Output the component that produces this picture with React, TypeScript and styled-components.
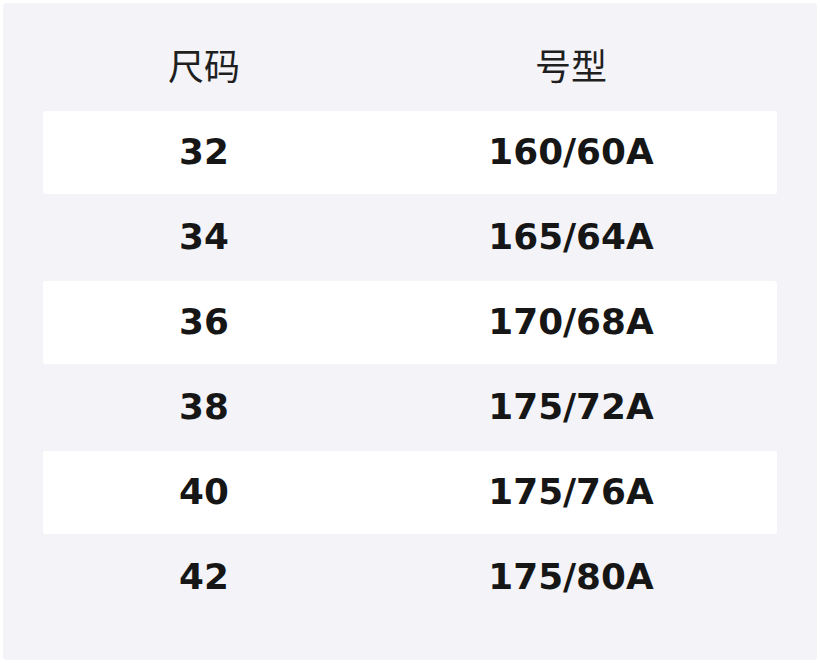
import React from "react";
import styled, { createGlobalStyle } from "styled-components";

const Global = createGlobalStyle`
  html, body { margin: 0; padding: 0; background: #ffffff; }
  body { padding: 3px; font-family: "DejaVu Sans", "Noto Sans CJK SC", sans-serif; }
`;

const Panel = styled.div`
  width: 814px;
  height: 657px;
  box-sizing: border-box;
  background: #f3f3f8;
  border-radius: 4px;
  padding: 22px 40px 40px 40px;
`;

const Table = styled.div`
  display: flex;
  flex-direction: column;
`;

const Row = styled.div<{ $striped?: boolean }>`
  display: grid;
  grid-template-columns: 322px 1fr;
  align-items: center;
  height: 85px;
  padding: 1px 0;
  box-sizing: border-box;
  background: ${(p) => (p.$striped ? "#ffffff" : "transparent")};
  border-radius: 3px;
  background-clip: content-box;
`;

const HeadCell = styled.div`
  text-align: center;
  font-family: "Noto Sans CJK SC", "DejaVu Sans", sans-serif;
  font-size: 36px;
  font-weight: 400;
  color: #1f1f1f;
  line-height: 1;
  padding-bottom: 7px;
`;

const Cell = styled.div`
  text-align: center;
  font-family: "DejaVu Sans", sans-serif;
  font-size: 35.8px;
  font-weight: 700;
  color: #161616;
  line-height: 1;
  padding-bottom: 2px;
`;

const rows: [string, string][] = [
  ["32", "160/60A"],
  ["34", "165/64A"],
  ["36", "170/68A"],
  ["38", "175/72A"],
  ["40", "175/76A"],
  ["42", "175/80A"],
];

export default function App() {
  return (
    <>
      <Global />
      <Panel>
        <Table>
          <Row>
            <HeadCell>尺码</HeadCell>
            <HeadCell>号型</HeadCell>
          </Row>
          {rows.map(([a, b], i) => (
            <Row key={a} $striped={i % 2 === 0}>
              <Cell>{a}</Cell>
              <Cell>{b}</Cell>
            </Row>
          ))}
        </Table>
      </Panel>
    </>
  );
}
